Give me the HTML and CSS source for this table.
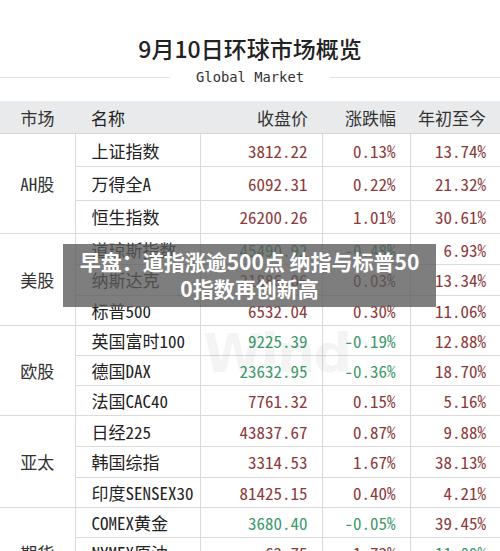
FILE: index.html
```html
<!DOCTYPE html>
<html>
	<head>
		<meta charset="UTF-8">
		<title>9月10日环球市场概览</title>
		<link rel="stylesheet" href="styles.css">
	</head>
	<body>
		<section id="wrap">
			<div class="head">
				<h1>9月10日环球市场概览</h1>
				<div class="sub"><span>Global Market</span></div>
			</div>
			<table class="market">
				<colgroup>
					<col class="w1">
					<col class="w2">
					<col class="w3">
					<col class="w4">
					<col class="w5">
				</colgroup>
				<thead>
					<tr>
						<th class="c1">市场</th>
						<th class="c2">名称</th>
						<th>收盘价</th>
						<th>涨跌幅</th>
						<th>年初至今</th>
					</tr>
				</thead>
				<tbody class="ah">
					<tr><td class="c1" rowspan="3">AH股</td><td class="c2">上证指数</td><td class="up">3812.22</td><td class="up">0.13%</td><td class="up">13.74%</td></tr>
					<tr><td class="c2">万得全A</td><td class="up">6092.31</td><td class="up">0.22%</td><td class="up">21.32%</td></tr>
					<tr><td class="c2">恒生指数</td><td class="up">26200.26</td><td class="up">1.01%</td><td class="up">30.61%</td></tr>
				</tbody>
				<tbody class="us">
					<tr><td class="c1" rowspan="3">美股</td><td class="c2">道琼斯指数</td><td class="down">45490.92</td><td class="down">-0.48%</td><td class="up">6.93%</td></tr>
					<tr><td class="c2">纳斯达克</td><td class="up">21886.06</td><td class="up">0.03%</td><td class="up">13.34%</td></tr>
					<tr><td class="c2">标普500</td><td class="up">6532.04</td><td class="up">0.30%</td><td class="up">11.06%</td></tr>
				</tbody>
				<tbody class="eu">
					<tr><td class="c1" rowspan="3">欧股</td><td class="c2">英国富时100</td><td class="down">9225.39</td><td class="down">-0.19%</td><td class="up">12.88%</td></tr>
					<tr><td class="c2">德国DAX</td><td class="down">23632.95</td><td class="down">-0.36%</td><td class="up">18.70%</td></tr>
					<tr><td class="c2">法国CAC40</td><td class="up">7761.32</td><td class="up">0.15%</td><td class="up">5.16%</td></tr>
				</tbody>
				<tbody class="ap">
					<tr><td class="c1" rowspan="3">亚太</td><td class="c2">日经225</td><td class="up">43837.67</td><td class="up">0.87%</td><td class="up">9.88%</td></tr>
					<tr><td class="c2">韩国综指</td><td class="up">3314.53</td><td class="up">1.67%</td><td class="up">38.13%</td></tr>
					<tr><td class="c2">印度SENSEX30</td><td class="up">81425.15</td><td class="up">0.40%</td><td class="up">4.21%</td></tr>
				</tbody>
				<tbody class="ft">
					<tr><td class="c1" rowspan="3">期货</td><td class="c2">COMEX黄金</td><td class="down">3680.40</td><td class="down">-0.05%</td><td class="up">39.45%</td></tr>
					<tr><td class="c2">NYMEX原油</td><td class="up">62.75</td><td class="up">1.72%</td><td class="down">-11.09%</td></tr>
					<tr><td class="c2">LME铜</td><td class="up">9962.00</td><td class="up">0.28%</td><td class="up">13.62%</td></tr>
				</tbody>
			</table>
			<div class="mark">Wind</div>
			<div class="caption">早盘：道指涨逾500点 纳指与标普50<br>0指数再创新高</div>
		</section>
	</body>
</html>
```

FILE: styles.css
```css
body{
	margin: 0;
	background: #fff;
	font-family: "Noto Sans Mono CJK SC", "Noto Sans CJK SC", "DejaVu Sans Mono", monospace;
	color: #333;
	overflow: hidden;
}
#wrap{
	width: 500px;
	position: relative;
}

.head{
	padding-top: 34px;
	text-align: center;
}
.head h1{
	margin: 0;
	font-family: "Noto Sans CJK SC", sans-serif;
	font-size: 23px;
	line-height: 28px;
	font-weight: 500;
	color: #222;
}
.sub{
	display: flex;
	align-items: center;
	gap: 26px;
	margin-top: 6px;
	height: 18px;
}
.sub::before,
.sub::after{
	content: "";
	flex: 1;
	height: 1px;
	background: #e2e2e2;
}
.sub span{
	font-family: "DejaVu Sans Mono", monospace;
	font-size: 13.8px;
	color: #333;
}

.market{
	width: 500px;
	margin-top: 15px;
	border-collapse: collapse;
	table-layout: fixed;
	font-size: 17px;
}
.w1{ width: 75px; }
.w2{ width: 125px; }
.w3{ width: 122px; }
.w4{ width: 88px; }
.w5{ width: 90px; }

.market th{
	height: 32px;
	padding: 0 14px 0 0;
	background: #e8eaec;
	font-weight: normal;
	text-align: right;
	color: #333;
	border-bottom: 1px solid #d6d6d6;
	white-space: nowrap;
}
.market td{
	padding: 0 14px 0 0;
	text-align: right;
	white-space: nowrap;
	border: 1px solid #dadada;
	border-top: none;
}
.market .c1{
	padding: 0;
	text-align: center;
	border-left: none;
}
.market .c2{
	padding-left: 16px;
	text-align: left;
	color: #222;
}
.market td:last-child,
.market th:last-child{
	border-right: none;
}

.ah tr{
	height: 33.4px;
}
.us tr{
	height: 30.7px;
}
.eu tr{
	height: 30px;
}
.ap tr{
	height: 30.7px;
}
.ft tr{
	height: 30px;
}

.up{
	color: #8c3a3a;
}
.down{
	color: #3d9a6c;
}

.mark{
	position: absolute;
	left: 203px;
	top: 322px;
	font-family: "DejaVu Sans", sans-serif;
	font-size: 54px;
	font-weight: bold;
	letter-spacing: -2px;
	color: rgba(0,0,0,0.045);
}

.caption{
	position: absolute;
	left: 63px;
	top: 244px;
	width: 373px;
	padding: 4px 0 5px;
	background: rgba(90,90,90,0.78);
	font-family: "Noto Sans CJK SC", sans-serif;
	font-size: 21px;
	line-height: 27px;
	font-weight: bold;
	color: #fff;
	text-align: center;
}
```
